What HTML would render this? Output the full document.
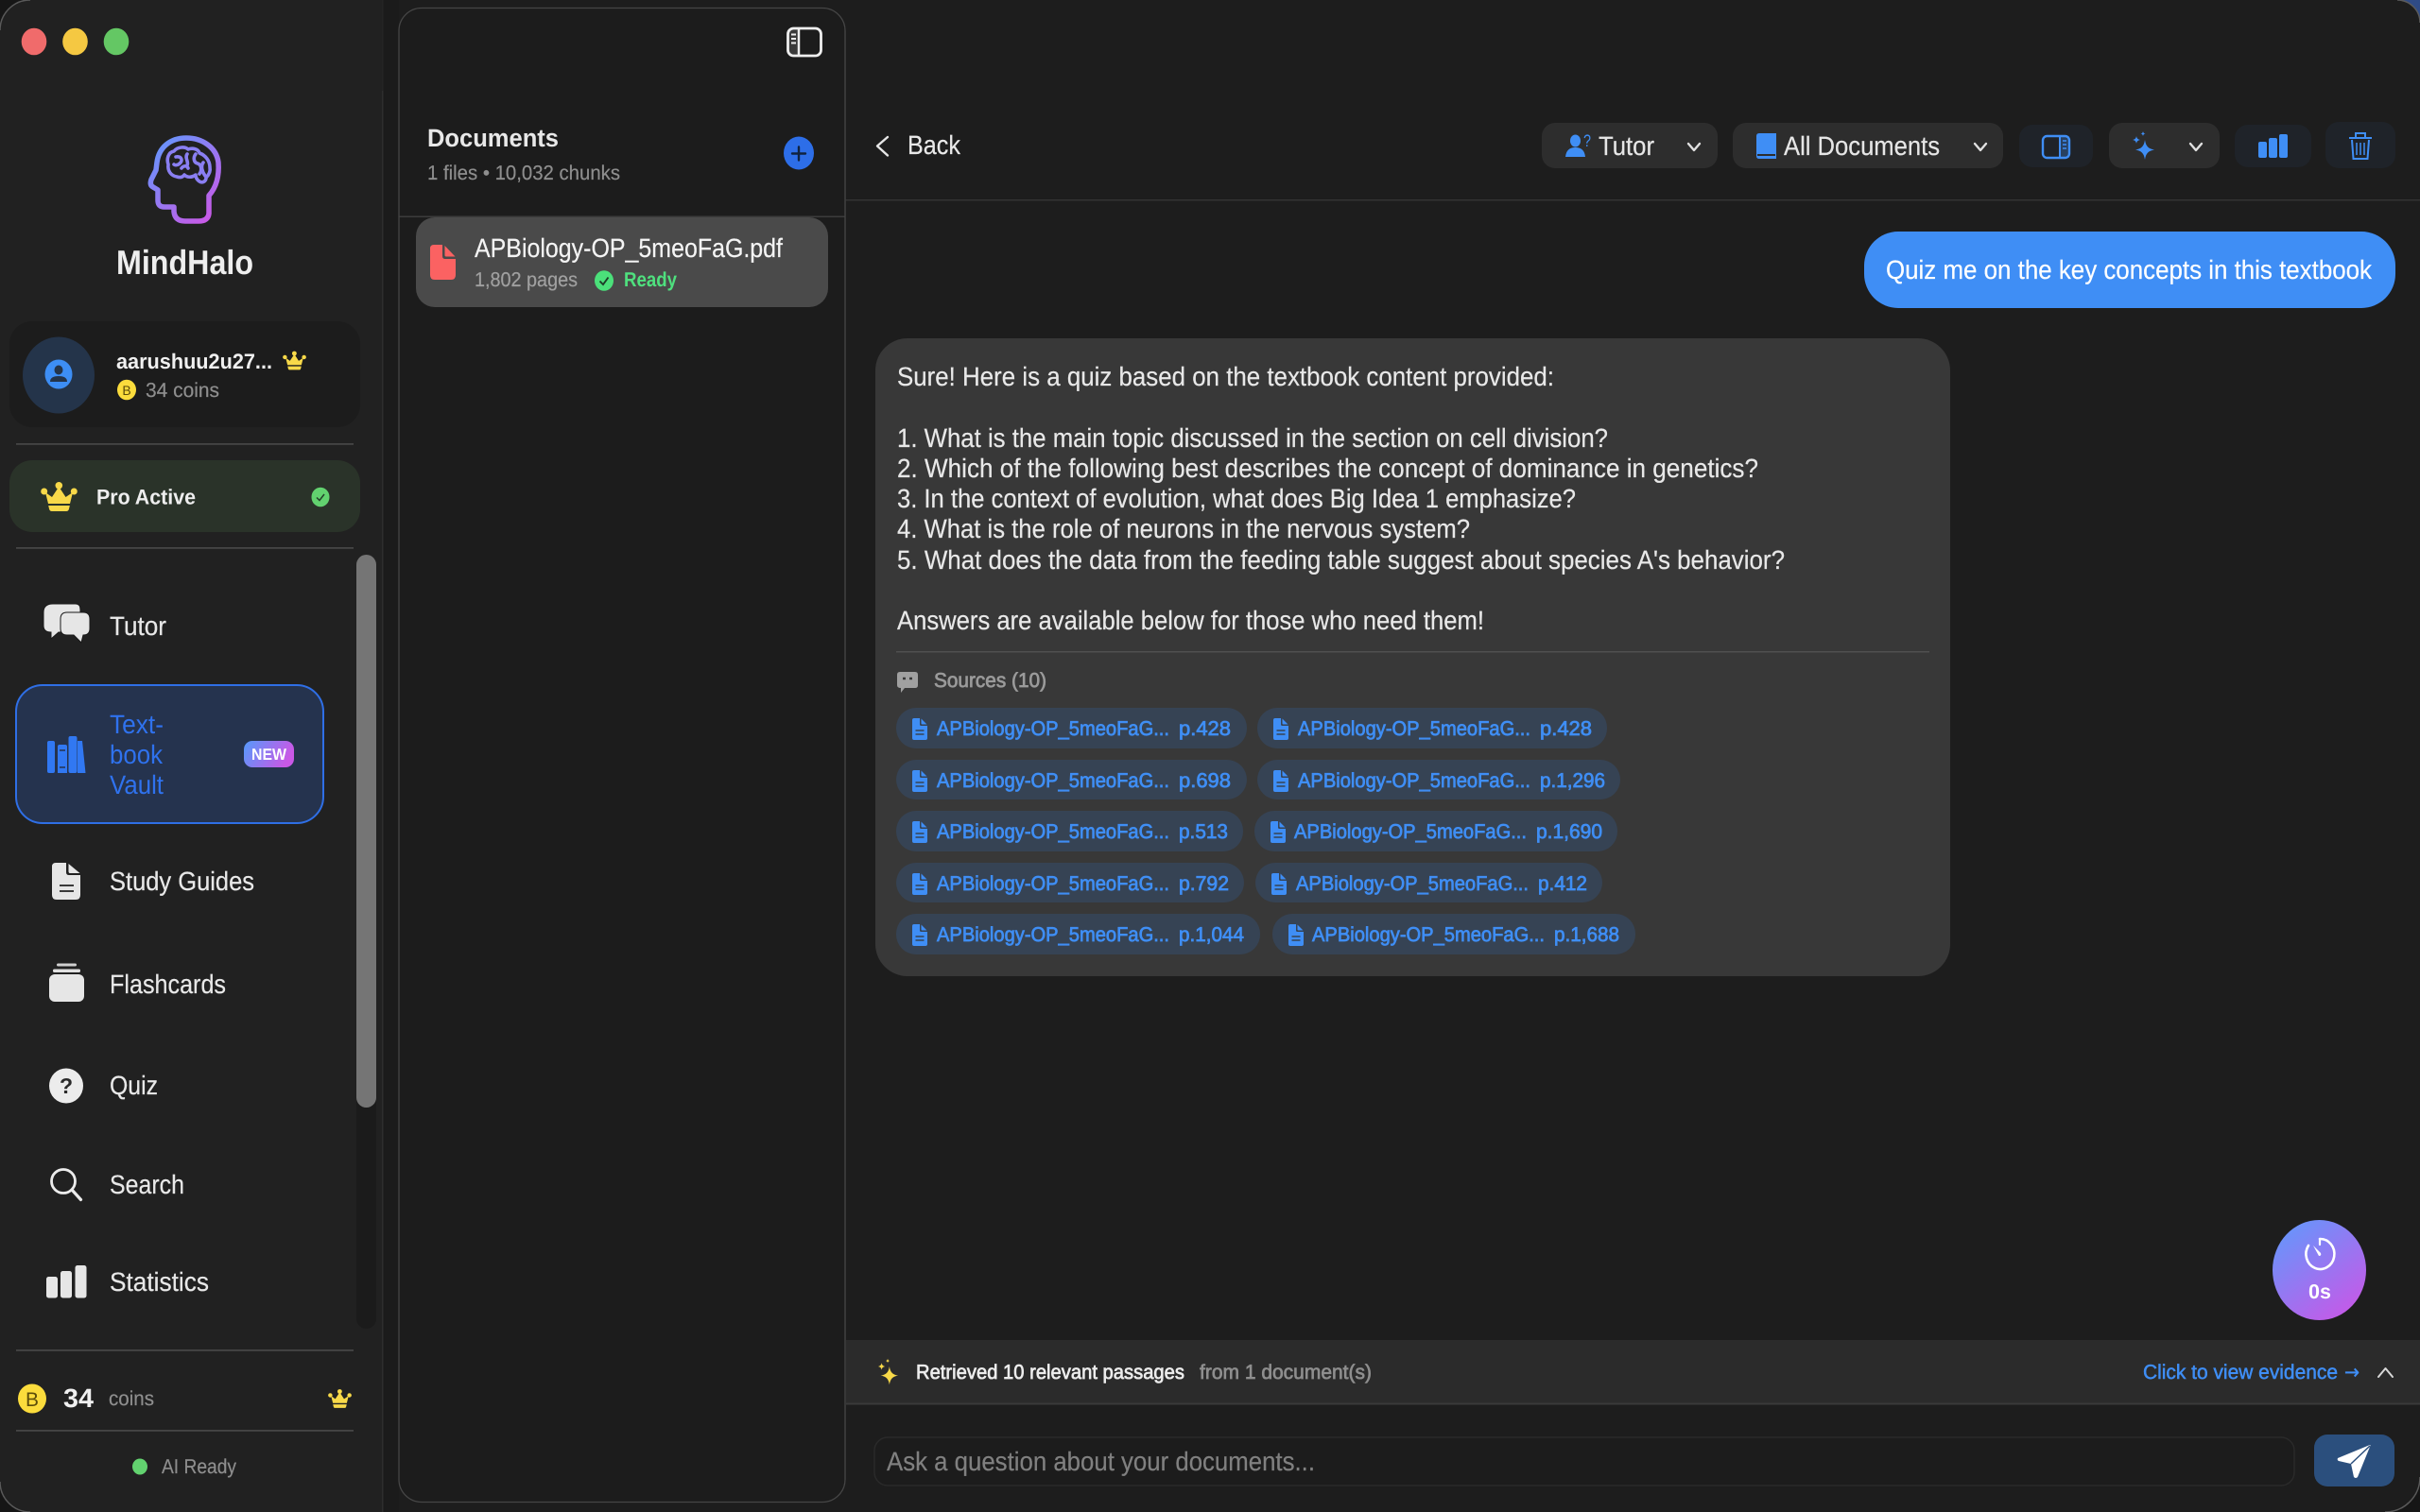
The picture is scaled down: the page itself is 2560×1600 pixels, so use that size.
<!DOCTYPE html>
<html lang="en"><head><meta charset="utf-8"><title>MindHalo</title>
<style>
html,body{margin:0;padding:0;background:#1d1d1d;width:2560px;height:1600px;overflow:hidden}
svg{display:block}
text{font-family:"Liberation Sans",sans-serif;text-rendering:geometricPrecision}
.b{font-weight:700}
</style></head><body>
<svg width="2560" height="1600" viewBox="0 0 2560 1600" xmlns="http://www.w3.org/2000/svg">
<defs>
<linearGradient id="lg" x1="0.1" y1="0" x2="0.9" y2="1"><stop offset="0" stop-color="#6397fd"/><stop offset="1" stop-color="#cb58e6"/></linearGradient>
<linearGradient id="ng" x1="0" y1="0" x2="1" y2="0.3"><stop offset="0" stop-color="#559afb"/><stop offset="1" stop-color="#c958e6"/></linearGradient>
<linearGradient id="tg" x1="0.15" y1="0.05" x2="0.8" y2="0.95"><stop offset="0" stop-color="#6795fb"/><stop offset="1" stop-color="#c45ae8"/></linearGradient>
<symbol id="crown" viewBox="0 0 39 31"><path fill="#f8d949" d="M5 11 L12 16 L19.3 5 L26.500 16 L34 11 L31 23 H8 Z"/><circle fill="#f8d949" cx="3.700" cy="10" r="3.500"/><circle fill="#f8d949" cx="19.300" cy="3.800" r="3.800"/><circle fill="#f8d949" cx="35.300" cy="10" r="3.500"/><path fill="#f8d949" d="M8.200 25 H30.800 L30 28.500 Q29.500 31 27 31 H12 Q9.500 31 9 28.500 Z"/></symbol>
<symbol id="doc" viewBox="0 0 16 23"><path fill="#3f8ef5" d="M2 0 H8 V6.500 Q8 8 9.500 8 H16 V21 Q16 23 14 23 H2 Q0 23 0 21 V2 Q0 0 2 0 Z M9.500 0.500 L15.500 6.500 H10.500 Q9.500 6.500 9.500 5.500 Z"/><path stroke="#364354" stroke-width="1.600" d="M3.500 13 H12.500 M3.500 17 H12.500"/></symbol>
<symbol id="spark" viewBox="0 0 25 30"><path d="M14 9 C15 16 18 18.500 24 19.500 C18 20.500 15 23 14 30 C13 23 10 20.500 4 19.500 C10 18.500 13 16 14 9 Z"/><path d="M5 5 C5.500 7.500 6.500 8.500 9 9 C6.500 9.500 5.500 10.500 5 13 C4.500 10.500 3.500 9.500 1 9 C3.500 8.500 4.500 7.500 5 5 Z"/><path d="M12 0 C12.300 1.600 13 2.300 14.500 2.500 C13 2.800 12.300 3.400 12 5 C11.700 3.400 11 2.800 9.500 2.500 C11 2.300 11.700 1.600 12 0 Z"/></symbol>
</defs>

<rect width="2560" height="1600" fill="#1d1d1d"/>
<rect x="405" y="0" width="17" height="1600" fill="#1b1b1b"/>
<rect x="0" y="0" width="404" height="1600" fill="#212121"/>
<rect x="404" y="0" width="1.500" height="96" fill="#242424"/>
<rect x="404" y="96" width="1.500" height="1504" fill="#2e2e2e"/>

<!-- traffic lights -->
<ellipse cx="36" cy="44" rx="13.300" ry="14.300" fill="#f06b6b"/>
<ellipse cx="79.500" cy="44" rx="13.300" ry="14.300" fill="#f5c842"/>
<ellipse cx="123" cy="44" rx="13.300" ry="14.300" fill="#64c764"/>

<!-- logo -->
<path fill="none" stroke="url(#lg)" stroke-width="5.500" stroke-linejoin="round" d="M221 207 C229 198 232 186 231 172 C229 156 214 146 197 146 C180 146 168 156 166 172 L165 180 L160 190 Q158 196 162 198 L167 201 V212 Q167 219 174 219 H184 V224 Q185 234 196 234 H210 Q220 234 221 226 Z"/>
<g fill="none" stroke="#8a7ff2" stroke-width="3.600" stroke-linecap="round" stroke-linejoin="round">
<path d="M187 187 C181 186 177 181 178 174 C176 168 178 161 184 160 C188 155 196 155 199 158 C204 156 210 158 211 162 C217 164 222 170 222 177 C223 182 220 186 218 188 C218 192 214 194 211 192 C208 190 207 187 207 185 C203 188 198 188 195 185 C193 188 190 188 187 187 Z"/>
<path d="M186 166 C192 165 194 170 190 173 C188 175 185 175 184 174 M192 178 C194 175 198 175 199 178 M198 163 C195 167 200 171 198 175 M207 163 C204 167 205 172 209 173 C213 174 214 180 211 184 M215 172 C212 176 214 182 217 186"/>
</g>
<text class="b" x="123" y="290" font-size="36" fill="#eeeeee" textLength="145" lengthAdjust="spacingAndGlyphs">MindHalo</text>

<!-- user card -->
<rect x="10" y="340" width="371" height="112" rx="24" fill="#1c1c1c"/>
<ellipse cx="62" cy="397" rx="38" ry="40.500" fill="#24344a"/>
<ellipse cx="62" cy="396" rx="14.500" ry="15.500" fill="#3d8ef5"/>
<ellipse cx="62" cy="391.500" rx="4.500" ry="5" fill="#24344a"/>
<path d="M53 404 Q53 398 62 398 Q71 398 71 404 Z" fill="#24344a"/>
<text class="b" x="123" y="390" font-size="22.500" fill="#f0f0f0" textLength="165" lengthAdjust="spacingAndGlyphs">aarushuu2u27...</text>
<use href="#crown" x="299" y="371" width="25" height="21"/>
<ellipse cx="134" cy="412.500" rx="10" ry="10.800" fill="#fbdc3c"/>
<text x="134" y="418" font-size="14" fill="#5c4d0a" text-anchor="middle">B</text>
<text x="154" y="420" font-size="21.500" fill="#8e8e8e" stroke="#8e8e8e" stroke-width=".2" textLength="78" lengthAdjust="spacingAndGlyphs">34 coins</text>
<rect x="17" y="469" width="357" height="1.800" fill="#454545"/>

<!-- pro card -->
<rect x="10" y="487" width="371" height="76" rx="24" fill="#2a3329"/>
<use href="#crown" x="43" y="510" width="39" height="31"/>
<text class="b" x="102" y="533.500" font-size="22.500" fill="#eeeeee" textLength="105" lengthAdjust="spacingAndGlyphs">Pro Active</text>
<ellipse cx="339" cy="526" rx="9.500" ry="10.300" fill="#62d26f"/>
<path d="M335 526.500 L338 529.500 L343 523" fill="none" stroke="#24402a" stroke-width="1.500"/>
<rect x="17" y="579" width="357" height="1.800" fill="#454545"/>

<!-- scrollbar -->
<rect x="377" y="587" width="21" height="819" rx="10.500" fill="#1b1b1b"/>
<rect x="377" y="587" width="21" height="585" rx="10.500" fill="#757575"/>

<!-- nav -->
<g fill="#e6e6e6" stroke="#1a1a1a" stroke-width="1">
<path d="M56 639 H80 Q85 639 85 645 V664 Q85 669 80 669 H62 L54 676 V669 Q46 669 46 662 V648 Q46 639 56 639 Z"/>
<path d="M71 648 H88 Q95 648 95 655 V665 Q95 672 88 672 L86 680 L78 672 H71 Q64 672 64 665 V655 Q64 648 71 648 Z"/>
</g>
<g stroke="#e8e8e8" stroke-width=".2">
<text x="116" y="672" font-size="28" fill="#e8e8e8" textLength="60" lengthAdjust="spacingAndGlyphs">Tutor</text>
</g>

<rect x="17" y="725" width="325" height="146" rx="28" fill="#25334e" stroke="#2f6fe6" stroke-width="2"/>
<g fill="#3178f2">
<rect x="50" y="784" width="8" height="34" rx="2"/>
<path d="M61 790 Q61 788 63 788 H69 Q71 788 71 790 V818 H61 Z"/>
<rect x="72.500" y="779" width="9" height="39" rx="2"/>
<path d="M82 784 L87 784 L90.500 818 H82 Z"/>
</g>
<path d="M63 794 H69 M63 812 H69" stroke="#25334e" stroke-width="1.500"/>
<g font-size="28" fill="#2f72ee">
<text x="116" y="776" textLength="57" lengthAdjust="spacingAndGlyphs">Text-</text>
<text x="116" y="808" textLength="56" lengthAdjust="spacingAndGlyphs">book</text>
<text x="116" y="840" textLength="57" lengthAdjust="spacingAndGlyphs">Vault</text>
</g>
<rect x="258" y="784" width="53" height="28" rx="9" fill="url(#ng)"/>
<text class="b" x="266" y="804" font-size="17" fill="#ffffff" textLength="37" lengthAdjust="spacingAndGlyphs">NEW</text>

<path d="M59 913 H70 V923 Q70 926 73 926 H85 V947 Q85 952 80 952 H60 Q55 952 55 947 V917 Q55 913 59 913 Z M72.500 914 L84.500 924 H74 Q72.500 924 72.500 922 Z" fill="#e6e6e6"/>
<path d="M63 937 H78 M63 943 H78" stroke="#3a3a3a" stroke-width="2"/>
<rect x="52" y="1031" width="37" height="29" rx="6" fill="#e6e6e6"/>
<rect x="56" y="1025.500" width="29" height="3.500" rx="1.500" fill="#e0e0e0"/>
<rect x="60" y="1019.500" width="21" height="3" rx="1.500" fill="#d0d0d0"/>
<ellipse cx="70" cy="1149" rx="18" ry="18.500" fill="#ececec"/>
<text class="b" x="70" y="1157" font-size="23" fill="#2a2a2a" text-anchor="middle">?</text>
<circle cx="67" cy="1250" r="12.500" fill="none" stroke="#ececec" stroke-width="2.800"/>
<path d="M76 1259 L85.500 1269.500" stroke="#ececec" stroke-width="3.200" stroke-linecap="round"/>
<g fill="#e6e6e6">
<rect x="49" y="1351" width="12" height="22.500" rx="2.500"/>
<rect x="64" y="1345" width="12" height="28.500" rx="2.500"/>
<rect x="79.500" y="1339" width="12" height="34.500" rx="2.500"/>
</g>
<g font-size="28" fill="#e8e8e8" stroke="#e8e8e8" stroke-width=".2">
<text x="116" y="942" textLength="153" lengthAdjust="spacingAndGlyphs">Study Guides</text>
<text x="116" y="1051" textLength="123" lengthAdjust="spacingAndGlyphs">Flashcards</text>
<text x="116" y="1158" textLength="51" lengthAdjust="spacingAndGlyphs">Quiz</text>
<text x="116" y="1263" textLength="79" lengthAdjust="spacingAndGlyphs">Search</text>
<text x="116" y="1366" textLength="105" lengthAdjust="spacingAndGlyphs">Statistics</text>
</g>

<rect x="17" y="1428" width="357" height="1.800" fill="#454545"/>
<ellipse cx="34" cy="1480" rx="15" ry="15.500" fill="#fbdc3c"/>
<text x="34" y="1488" font-size="21" fill="#5c4d0a" text-anchor="middle">B</text>
<text class="b" x="67" y="1489" font-size="28" fill="#f0f0f0" textLength="32" lengthAdjust="spacingAndGlyphs">34</text>
<text x="115" y="1487" font-size="21.500" fill="#8e8e8e" stroke="#8e8e8e" stroke-width=".2" textLength="48" lengthAdjust="spacingAndGlyphs">coins</text>
<use href="#crown" x="347" y="1470" width="25" height="20"/>
<rect x="17" y="1513" width="357" height="1.800" fill="#454545"/>
<ellipse cx="148" cy="1552" rx="8" ry="8.500" fill="#62d26f"/>
<text x="171" y="1559" font-size="21.500" fill="#8e8e8e" stroke="#8e8e8e" stroke-width=".2" textLength="79" lengthAdjust="spacingAndGlyphs">AI Ready</text>

<!-- documents panel -->
<rect x="422" y="8.500" width="472" height="1581" rx="24" fill="#1c1c1c" stroke="#464646" stroke-width="1.300"/>
<rect x="833.500" y="30" width="12" height="29" rx="5" fill="#3a3a3a"/>
<rect x="833.500" y="30" width="35" height="29" rx="6" fill="none" stroke="#eeeeee" stroke-width="2.800"/>
<path d="M845 30 V59" stroke="#eeeeee" stroke-width="2.500"/>
<path d="M837 36.500 H842 M837 41 H842 M837 45.500 H842" stroke="#eeeeee" stroke-width="2"/>
<text class="b" x="452" y="155" font-size="26.500" fill="#e8e8e8" textLength="139" lengthAdjust="spacingAndGlyphs">Documents</text>
<text x="452" y="190" font-size="21.500" fill="#8e8e8e" stroke="#8e8e8e" stroke-width=".2" textLength="204" lengthAdjust="spacingAndGlyphs">1 files • 10,032 chunks</text>
<ellipse cx="845" cy="162" rx="16" ry="17.500" fill="#2d6ee8"/>
<path d="M838 162.500 H852 M845 155.500 V169.500" stroke="#10233f" stroke-width="2.400" stroke-linecap="round"/>
<rect x="422.500" y="228.500" width="471" height="1.500" fill="#3c3c3c"/>
<rect x="440" y="230" width="436" height="95" rx="20" fill="#4a4a4a"/>
<path d="M459 259 H468 V271 Q468 274 471 274 H482 V291 Q482 296 477 296 H460 Q455 296 455 291 V263 Q455 259 459 259 Z M470.500 260 L481.500 271.500 H472 Q470.500 271.500 470.500 270 Z" fill="#fb6262"/>
<text x="502" y="272" font-size="28" fill="#f4f4f4" stroke="#f4f4f4" stroke-width=".2" textLength="326" lengthAdjust="spacingAndGlyphs">APBiology-OP_5meoFaG.pdf</text>
<text x="502" y="303" font-size="21.500" fill="#a0a0a0" stroke="#a0a0a0" stroke-width=".2" textLength="109" lengthAdjust="spacingAndGlyphs">1,802 pages</text>
<ellipse cx="639" cy="297" rx="10" ry="10.800" fill="#4be07a"/>
<path d="M634.500 297.500 L638 301 L643.500 293.500" fill="none" stroke="#1d3d28" stroke-width="1.900"/>
<text class="b" x="660" y="303" font-size="21.500" fill="#4fe07e" textLength="56" lengthAdjust="spacingAndGlyphs">Ready</text>

<!-- header -->
<rect x="894.500" y="211" width="1666" height="1.500" fill="#333333"/>
<path d="M939 145 L928 154.500 L939 164.500" fill="none" stroke="#e6e6e6" stroke-width="2.400" stroke-linecap="round" stroke-linejoin="round"/>
<text x="960" y="163" font-size="28" fill="#e8e8e8" stroke="#e8e8e8" stroke-width=".2" textLength="56" lengthAdjust="spacingAndGlyphs">Back</text>

<rect x="1631" y="130" width="186" height="48" rx="14" fill="#2d2d2d"/>
<ellipse cx="1666.500" cy="149" rx="5.500" ry="6.500" fill="#3f8ef5"/>
<path d="M1656 166 Q1657 156 1666.500 156 Q1676 156 1677 166 Z" fill="#3f8ef5"/>
<text x="1675" y="155" font-size="18" fill="#3f8ef5" textLength="8" lengthAdjust="spacingAndGlyphs">?</text>
<text x="1691" y="164" font-size="28" fill="#e6e6e6" stroke="#e6e6e6" stroke-width=".2" textLength="59" lengthAdjust="spacingAndGlyphs">Tutor</text>
<path d="M1786 152 L1792 159 L1798 152" fill="none" stroke="#e0e0e0" stroke-width="2.400" stroke-linecap="round" stroke-linejoin="round"/>

<rect x="1833" y="130" width="286" height="48" rx="14" fill="#2d2d2d"/>
<path d="M1861 141 H1879 V168 H1861 Q1858 168 1858 165 V144 Q1858 141 1861 141 Z" fill="#3f8ef5"/>
<path d="M1859 164 H1878" stroke="#2d2d2d" stroke-width="2"/>
<text x="1887" y="164" font-size="28" fill="#e6e6e6" stroke="#e6e6e6" stroke-width=".2" textLength="165" lengthAdjust="spacingAndGlyphs">All Documents</text>
<path d="M2089 152 L2095 159 L2101 152" fill="none" stroke="#e0e0e0" stroke-width="2.400" stroke-linecap="round" stroke-linejoin="round"/>

<rect x="2136" y="132" width="78" height="45" rx="14" fill="#1f2329"/>
<rect x="2161" y="144" width="28" height="23" rx="4.500" fill="none" stroke="#3f8ef5" stroke-width="2.400"/>
<rect x="2179" y="144" width="10" height="23" fill="#3f8ef5" opacity=".28"/>
<path d="M2179 144 V167" stroke="#3f8ef5" stroke-width="2"/>
<path d="M2182 149 H2186 M2182 153 H2186 M2182 157 H2186" stroke="#3f8ef5" stroke-width="1.500"/>

<rect x="2231" y="130" width="117" height="48" rx="14" fill="#2d2d2d"/>
<use href="#spark" x="2255" y="139" width="25" height="30" fill="#3f8ef5"/>
<path d="M2317 152 L2323 159 L2329 152" fill="none" stroke="#e0e0e0" stroke-width="2.400" stroke-linecap="round" stroke-linejoin="round"/>

<rect x="2364" y="132" width="81" height="45" rx="14" fill="#1f2329"/>
<g fill="#3f8ef5">
<rect x="2389" y="150" width="9" height="17" rx="2"/>
<rect x="2400" y="146" width="9" height="21" rx="2"/>
<rect x="2411" y="142" width="9" height="25" rx="2"/>
</g>

<rect x="2460" y="129" width="74" height="49" rx="14" fill="#1f2329"/>
<g fill="none" stroke="#3f8ef5" stroke-width="2">
<path d="M2485 146 H2509 M2492 146 V141 H2502 V146"/>
<path d="M2488 148 L2489.500 168 H2504.500 L2506 148"/>
<path d="M2493 151 V164 M2497 151 V164 M2501 151 V164" stroke-width="1.500"/>
</g>

<!-- user bubble -->
<rect x="1972" y="245" width="562" height="81" rx="36" fill="#3f8ef5"/>
<text x="1995" y="295" font-size="28" fill="#ffffff" stroke="#ffffff" stroke-width=".2" textLength="514" lengthAdjust="spacingAndGlyphs">Quiz me on the key concepts in this textbook</text>

<!-- assistant bubble -->
<rect x="926" y="358" width="1137" height="675" rx="34" fill="#383838"/>
<g font-size="28" fill="#e8e8e8" stroke="#e8e8e8" stroke-width=".2">
<text x="949" y="408" textLength="695" lengthAdjust="spacingAndGlyphs">Sure! Here is a quiz based on the textbook content provided:</text>
<text x="949" y="473" textLength="752" lengthAdjust="spacingAndGlyphs">1. What is the main topic discussed in the section on cell division?</text>
<text x="949" y="505" textLength="911" lengthAdjust="spacingAndGlyphs">2. Which of the following best describes the concept of dominance in genetics?</text>
<text x="949" y="537" textLength="718" lengthAdjust="spacingAndGlyphs">3. In the context of evolution, what does Big Idea 1 emphasize?</text>
<text x="949" y="569" textLength="606" lengthAdjust="spacingAndGlyphs">4. What is the role of neurons in the nervous system?</text>
<text x="949" y="602" textLength="939" lengthAdjust="spacingAndGlyphs">5. What does the data from the feeding table suggest about species A's behavior?</text>
<text x="949" y="666" textLength="621" lengthAdjust="spacingAndGlyphs">Answers are available below for those who need them!</text>
</g>
<rect x="948" y="689" width="1093" height="1.500" fill="#505050"/>
<path d="M952 711 H968 Q971 711 971 714 V725 Q971 728 968 728 H957 L953 733 V728 Q949 728 949 725 V714 Q949 711 952 711 Z" fill="#a0a0a0"/>
<path d="M955 718 H958 M962 718 H965" stroke="#383838" stroke-width="2.500"/>
<text x="988" y="727" font-size="21.500" fill="#9a9a9a" stroke="#9a9a9a" stroke-width=".75" textLength="119" lengthAdjust="spacingAndGlyphs">Sources (10)</text>

<!-- chips -->
<g fill="#364354">
<rect x="948" y="749" width="371" height="43" rx="21"/><rect x="1330" y="749" width="370" height="43" rx="21"/>
<rect x="948" y="804" width="371" height="42" rx="21"/><rect x="1330" y="804" width="384" height="42" rx="21"/>
<rect x="948" y="858" width="367" height="43" rx="21"/><rect x="1327" y="858" width="384" height="43" rx="21"/>
<rect x="948" y="913" width="368" height="42" rx="21"/><rect x="1328" y="913" width="367" height="42" rx="21"/>
<rect x="948" y="967" width="385" height="43" rx="21"/><rect x="1346" y="967" width="384" height="43" rx="21"/>
</g>
<use href="#doc" x="965" y="760" width="16" height="23"/><use href="#doc" x="1347" y="760" width="16" height="23"/>
<use href="#doc" x="965" y="815" width="16" height="23"/><use href="#doc" x="1347" y="815" width="16" height="23"/>
<use href="#doc" x="965" y="869" width="16" height="23"/><use href="#doc" x="1344" y="869" width="16" height="23"/>
<use href="#doc" x="965" y="924" width="16" height="23"/><use href="#doc" x="1345" y="924" width="16" height="23"/>
<use href="#doc" x="965" y="978" width="16" height="23"/><use href="#doc" x="1363" y="978" width="16" height="23"/>
<g font-size="21.500" fill="#3f8ef5" stroke="#3f8ef5" stroke-width=".75">
<text x="991" y="778" textLength="246" lengthAdjust="spacingAndGlyphs">APBiology-OP_5meoFaG...</text><text x="1247" y="778" textLength="55" lengthAdjust="spacingAndGlyphs">p.428</text>
<text x="1373" y="778" textLength="246" lengthAdjust="spacingAndGlyphs">APBiology-OP_5meoFaG...</text><text x="1629" y="778" textLength="55" lengthAdjust="spacingAndGlyphs">p.428</text>
<text x="991" y="833" textLength="246" lengthAdjust="spacingAndGlyphs">APBiology-OP_5meoFaG...</text><text x="1247" y="833" textLength="55" lengthAdjust="spacingAndGlyphs">p.698</text>
<text x="1373" y="833" textLength="246" lengthAdjust="spacingAndGlyphs">APBiology-OP_5meoFaG...</text><text x="1629" y="833" textLength="69" lengthAdjust="spacingAndGlyphs">p.1,296</text>
<text x="991" y="887" textLength="246" lengthAdjust="spacingAndGlyphs">APBiology-OP_5meoFaG...</text><text x="1247" y="887" textLength="52" lengthAdjust="spacingAndGlyphs">p.513</text>
<text x="1369" y="887" textLength="246" lengthAdjust="spacingAndGlyphs">APBiology-OP_5meoFaG...</text><text x="1625" y="887" textLength="70" lengthAdjust="spacingAndGlyphs">p.1,690</text>
<text x="991" y="942" textLength="246" lengthAdjust="spacingAndGlyphs">APBiology-OP_5meoFaG...</text><text x="1247" y="942" textLength="53" lengthAdjust="spacingAndGlyphs">p.792</text>
<text x="1371" y="942" textLength="246" lengthAdjust="spacingAndGlyphs">APBiology-OP_5meoFaG...</text><text x="1627" y="942" textLength="52" lengthAdjust="spacingAndGlyphs">p.412</text>
<text x="991" y="996" textLength="246" lengthAdjust="spacingAndGlyphs">APBiology-OP_5meoFaG...</text><text x="1247" y="996" textLength="69" lengthAdjust="spacingAndGlyphs">p.1,044</text>
<text x="1388" y="996" textLength="246" lengthAdjust="spacingAndGlyphs">APBiology-OP_5meoFaG...</text><text x="1644" y="996" textLength="69" lengthAdjust="spacingAndGlyphs">p.1,688</text>
</g>

<!-- timer -->
<ellipse cx="2453.500" cy="1344" rx="49.500" ry="53" fill="url(#tg)"/>
<path d="M2454 1311 A15 16 0 1 1 2442 1318" fill="none" stroke="#ffffff" stroke-width="2.600" stroke-linecap="round"/>
<path d="M2454 1311 V1317" stroke="#ffffff" stroke-width="2.200" stroke-linecap="round"/>
<path d="M2447 1318 L2455 1326 Q2456 1329 2453 1329 Z" fill="#ffffff"/>
<text class="b" x="2454" y="1374" font-size="21.500" fill="#ffffff" text-anchor="middle">0s</text>

<!-- evidence bar -->
<rect x="895" y="1418" width="1665" height="67" fill="#2b2b2b"/>
<rect x="895" y="1484.500" width="1665" height="2" fill="#3a3a3a"/>
<use href="#spark" x="928" y="1437" width="23" height="29" fill="#f8d949"/>
<text x="969" y="1459" font-size="21.500" fill="#ededed" stroke="#ededed" stroke-width=".7" textLength="284" lengthAdjust="spacingAndGlyphs">Retrieved 10 relevant passages</text>
<text x="1269" y="1459" font-size="21.500" fill="#8e8e8e" stroke="#8e8e8e" stroke-width=".7" textLength="182" lengthAdjust="spacingAndGlyphs">from 1 document(s)</text>
<text x="2267" y="1459" font-size="21.500" fill="#3f8ef5" stroke="#3f8ef5" stroke-width=".5" textLength="206" lengthAdjust="spacingAndGlyphs">Click to view evidence</text>
<text x="2480" y="1459" font-size="21" fill="#3f8ef5" stroke="#3f8ef5" stroke-width=".4" style="font-family:'DejaVu Sans',sans-serif" textLength="16" lengthAdjust="spacingAndGlyphs">→</text>
<path d="M2516 1457 L2523.500 1448 L2531 1457" fill="none" stroke="#d8d8d8" stroke-width="2" stroke-linecap="round" stroke-linejoin="round"/>

<!-- input -->
<rect x="925" y="1521" width="1502" height="51" rx="14" fill="#1c1c1c" stroke="#2a2a2a" stroke-width="1.500"/>
<text x="938" y="1556" font-size="28" fill="#808080" stroke="#808080" stroke-width=".2" textLength="453" lengthAdjust="spacingAndGlyphs">Ask a question about your documents...</text>
<rect x="2448" y="1518" width="85" height="55" rx="14" fill="#2b4f7d"/>
<path d="M2507 1529 L2473 1543 Q2472 1545 2474 1546 L2487 1549 L2490 1563 Q2492 1565 2494 1563 L2507 1531 Q2508 1529 2507 1529 Z" fill="#ffffff"/>
<path d="M2487 1549 L2507 1530" stroke="#2b4f7d" stroke-width="1.500"/>

<!-- window corners -->
<path d="M0 0 H32 A32 32 0 0 0 0 32 Z" fill="#161616"/>
<path d="M0 32 A32 32 0 0 1 32 0" fill="none" stroke="#5a5a5a" stroke-width="1.500"/>
<path d="M0 1600 H32 A32 32 0 0 1 0 1568 Z" fill="#161616"/>
<path d="M0 1568 A32 32 0 0 0 32 1600" fill="none" stroke="#5a5a5a" stroke-width="1.500"/>
<path d="M2560 1600 H2523 A37 37 0 0 0 2560 1563 Z" fill="#161616"/>
<path d="M2560 1563 A37 37 0 0 1 2523 1600" fill="none" stroke="#5a5a5a" stroke-width="1.500"/>
<path d="M2536 0 H2560 V24 A24 24 0 0 0 2536 0 Z" fill="#2f4b86"/>
<path d="M2536 0 A24 24 0 0 1 2560 24" fill="none" stroke="#5a5a5a" stroke-width="1.500"/>
</svg>
</body></html>
